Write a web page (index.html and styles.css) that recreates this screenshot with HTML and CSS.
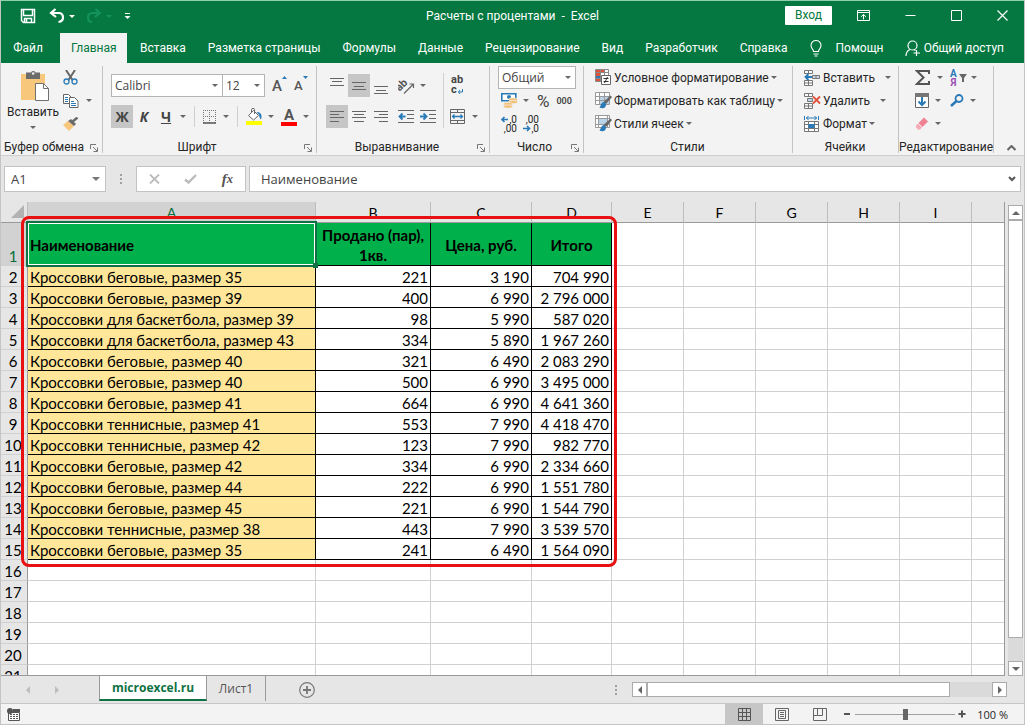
FILE: index.html
```html
<!DOCTYPE html>
<html lang="ru">
<head>
<meta charset="utf-8">
<title>Расчеты с процентами - Excel</title>
<link rel="stylesheet" href="styles.css">
</head>
<body>
<div class="window">
  <header class="titlebar">
    <div class="quick">
      <button class="ib" aria-label="Сохранить"><svg width="16" height="16" viewBox="0 0 16 16" fill="none" stroke="#fff" stroke-width="1.500"><path d="M1.500 1.500h13v13h-11l-2-2z"/><path d="M3.500 2v5.500h9V2M4.500 14v-3.500h7V14M6.500 11v3"/></svg></button>
      <button class="ib undo" aria-label="Отменить"><svg width="16" height="16" viewBox="0 0 16 16" fill="none" stroke="#fff" stroke-width="2.200"><path d="M6.500 1L2 5l5 4M2 5h7.500c3 0 4.500 2 4.500 4.500s-1.500 4-4.500 4.500"/></svg><i class="caret light"></i></button>
      <button class="ib redo" aria-label="Вернуть" disabled><svg width="16" height="16" viewBox="0 0 16 16" fill="none" stroke="#14935c" stroke-width="2"><path d="M9.500 1L14 5l-5 4M14 5H6.500C3.500 5 2 7 2 9.500S3.500 14 6 14"/></svg><i class="caret faint"></i></button>
      <button class="ib" aria-label="Настройка панели"><svg width="7" height="8" viewBox="0 0 7 8"><path d="M1 1.500h5" stroke="#fff"/><path d="M0.500 4h6L3.500 7z" fill="#fff"/></svg></button>
    </div>
    <h1 class="doc-title">Расчеты с процентами&nbsp; -&nbsp; Excel</h1>
    <div class="win-ctl">
      <button class="login">Вход</button>
      <button class="ib" aria-label="Параметры ленты"><svg width="13" height="11" viewBox="0 0 13 11" fill="none" stroke="#fff"><path d="M.5.5h12v10H.5zM.5 2.500h12M6.500 9.500V4.500M4 6.800l2.500-2.300L9 6.800"/></svg></button>
      <button class="ib" aria-label="Свернуть"><svg width="11" height="11" viewBox="0 0 11 11" stroke="#fff"><path d="M.5 5.500h10"/></svg></button>
      <button class="ib" aria-label="Развернуть"><svg width="11" height="11" viewBox="0 0 11 11" stroke="#fff" fill="none"><path d="M.5.5h10v10H.5z"/></svg></button>
      <button class="ib" aria-label="Закрыть"><svg width="11" height="11" viewBox="0 0 11 11" stroke="#fff" stroke-width="1.200"><path d="M.5.5l10 10M10.500.5l-10 10"/></svg></button>
    </div>
  </header>

  <nav class="tabs">
    <button class="tab file">Файл</button>
    <button class="tab active">Главная</button>
    <button class="tab">Вставка</button>
    <button class="tab">Разметка страницы</button>
    <button class="tab">Формулы</button>
    <button class="tab">Данные</button>
    <button class="tab">Рецензирование</button>
    <button class="tab">Вид</button>
    <button class="tab">Разработчик</button>
    <button class="tab">Справка</button>
    <button class="tab help"><svg width="12" height="17" viewBox="0 0 12 17" fill="none" stroke="#fff" stroke-width="1.100"><path d="M3.500 11.500C3.500 9 1 8.500 1 5.500a5 5 0 0 1 10 0c0 3-2.500 3.500-2.500 6zM3.500 14h5M4.500 16h3"/></svg>Помощн</button>
    <button class="tab share"><svg width="16" height="17" viewBox="0 0 16 17" fill="none" stroke="#fff" stroke-width="1.200"><circle cx="7.500" cy="5.500" r="4.500"/><path d="M1 16c0-3.500 1.500-5.500 4-6.500M9 9.500l1.500 1M11.500 10v6M8.500 13h6.500"/></svg>Общий доступ</button>
  </nav>

  <section class="ribbon">
    <div class="group g-clip">
      <div class="clip-body">
        <button class="paste"><svg width="29" height="32" viewBox="0 0 29 32"><path d="M0 4h24v26H0z" fill="#f7c77c"/><path d="M5 2.500h5a2.500 2.500 0 0 1 4.500 0H19V9H5z" fill="#6b6b6b"/><circle cx="12.200" cy="3.500" r="1.300" fill="#f3f3f3"/><path d="M14.500 13.500h8l5 5v12h-13z" fill="#fff" stroke="#707070"/><path d="M22.500 13.500v5h5" fill="none" stroke="#707070"/></svg><span>Вставить</span><i class="caret"></i></button>
        <div class="clip-side">
          <button class="ib" aria-label="Вырезать"><svg width="15" height="15" viewBox="0 0 15 15" fill="none"><path d="M3 0l6.500 10M12 0L5.500 10" stroke="#666" stroke-width="2"/><circle cx="3.500" cy="11.500" r="2.500" stroke="#2a7ab8" stroke-width="1.300"/><circle cx="11.500" cy="11.500" r="2.500" stroke="#2a7ab8" stroke-width="1.300"/></svg></button>
          <button class="ib" aria-label="Копировать"><svg width="16" height="14" viewBox="0 0 16 14" fill="#fff" stroke="#666"><path d="M.5.5h5l3 3v6h-8z"/><path d="M6.500 3.500h5l3.500 3.500v6.500H6.500z"/><path d="M2 3.500h3M2 5.500h3M2 7.500h3M8 7.500h3M8 9.500h5M8 11.500h5" stroke="#2a7ab8"/></svg><i class="caret"></i></button>
          <button class="ib" aria-label="Формат по образцу"><svg width="16" height="14" viewBox="0 0 16 14"><path d="M5 4l6 5-5 5L0 8z" fill="#f7c77c"/><path d="M5 4l3-2 5 5-2 2z" fill="#6b6b6b"/><path d="M9 5l5.500-4.500" stroke="#6b6b6b" stroke-width="2.500"/></svg></button>
        </div>
      </div>
      <div class="glabel">Буфер обмена<button class="launch" aria-label="Буфер обмена: параметры"><svg width="8" height="8" viewBox="0 0 8 8" fill="none" stroke="#777"><path d="M.5 5V.5H6M3 3l4 4M7.500 3.500v4h-4"/></svg></button></div>
    </div>

    <div class="group g-font">
      <div class="row r1">
        <label class="combo font-name"><input value="Calibri" aria-label="Шрифт"><i class="caret"></i></label><label class="combo font-size"><input value="12" aria-label="Размер шрифта"><i class="caret"></i></label>
        <button class="ib grow" aria-label="Увеличить размер"><b>A</b><svg width="5" height="3" viewBox="0 0 5 3"><path d="M0 3h5L2.500 0z" fill="#2a7ab8"/></svg></button>
        <button class="ib grow small" aria-label="Уменьшить размер"><b>A</b><svg width="5" height="3" viewBox="0 0 5 3"><path d="M0 0h5L2.500 3z" fill="#2a7ab8"/></svg></button>
      </div>
      <div class="row r2">
        <button class="tgl on letter" aria-label="Полужирный">Ж</button>
        <button class="tgl letter it" aria-label="Курсив">К</button>
        <button class="tgl letter un" aria-label="Подчеркнутый">Ч</button><i class="caret"></i>
        <i class="vsep"></i>
        <button class="ib" aria-label="Границы"><svg width="13" height="14" viewBox="0 0 13 14" fill="none" stroke="#777"><path d="M.5 0v13M12.500 0v13M6.500 0v13M0 .5h13M0 6.500h13" stroke-dasharray="1 1"/><path d="M0 13h13" stroke="#555" stroke-width="1.500"/></svg><i class="caret"></i></button>
        <i class="vsep"></i>
        <button class="ib fill" aria-label="Цвет заливки"><svg width="16" height="17" viewBox="0 0 16 17" fill="none"><path d="M7.500 2.500L2.500 7.500l5 4.500 5-4.500z" fill="#fff" stroke="#666"/><path d="M5.500 5V1.500c0-1.500 3-1.500 3 0V6" stroke="#666"/><path d="M10.500 4c4.500 0 6 3 4.500 7.500-1-1-2-2.500-1.800-4.500z" fill="#2a7ab8"/><path d="M0 13h16v4H0z" fill="#ff0"/></svg><i class="caret"></i></button>
        <button class="ib fcolor" aria-label="Цвет текста"><b>A</b><i class="caret"></i></button>
      </div>
      <div class="glabel">Шрифт<button class="launch" aria-label="Шрифт: параметры"><svg width="8" height="8" viewBox="0 0 8 8" fill="none" stroke="#777"><path d="M.5 5V.5H6M3 3l4 4M7.500 3.500v4h-4"/></svg></button></div>
    </div>

    <div class="group g-align">
      <div class="align-body">
        <div class="align-main">
          <div class="row r1">
            <button class="tgl" aria-label="По верхнему краю"><svg width="14" height="16" viewBox="0 0 14 16" stroke="#666"><path d="M0 .5h14M2 3.500h10M0 7.500h14"/></svg></button>
            <button class="tgl on" aria-label="По середине"><svg width="14" height="16" viewBox="0 0 14 16" stroke="#666"><path d="M0 4.500h14M2 8.500h10M0 11.500h14"/></svg></button>
            <button class="tgl" aria-label="По нижнему краю"><svg width="14" height="16" viewBox="0 0 14 16" stroke="#666"><path d="M0 8.500h14M2 12.500h10M0 15.500h14"/></svg></button>
            <button class="ib orient" aria-label="Ориентация"><svg width="17" height="18" viewBox="0 0 17 18"><text x="0" y="13" transform="rotate(-45 3 12)" class="orient-text">ab</text><path d="M6 16.500l9-9M11.500 7H15.500V11" stroke="#666" fill="none" stroke-width="1.200"/></svg><i class="caret"></i></button>
          </div>
          <div class="row r2">
            <button class="tgl on" aria-label="По левому краю"><svg width="14" height="12" viewBox="0 0 14 12" stroke="#666"><path d="M0 .5h14M0 3.500h9M0 6.500h14M0 10.500h9"/></svg></button>
            <button class="tgl" aria-label="По центру"><svg width="14" height="12" viewBox="0 0 14 12" stroke="#666"><path d="M0 .5h14M2 3.500h10M0 6.500h14M2 10.500h10"/></svg></button>
            <button class="tgl" aria-label="По правому краю"><svg width="14" height="12" viewBox="0 0 14 12" stroke="#666"><path d="M0 .5h14M5 3.500h9M0 6.500h14M5 10.500h9"/></svg></button>
            <button class="tgl indent" aria-label="Уменьшить отступ"><svg width="16" height="13" viewBox="0 0 16 13" fill="none" stroke="#666"><path d="M0 .5h16M9 4.500h7M9 8.500h7M0 12.500h16"/><path d="M7.500 6.500H1.500M4.500 3.500l-3 3 3 3" stroke="#2a7ab8" stroke-width="1.800"/></svg></button>
            <button class="tgl" aria-label="Увеличить отступ"><svg width="16" height="13" viewBox="0 0 16 13" fill="none" stroke="#666"><path d="M0 .5h16M9 4.500h7M9 8.500h7M0 12.500h16"/><path d="M0 6.500h6M3.500 3.500l3 3-3 3" stroke="#2a7ab8" stroke-width="1.800"/></svg></button>
          </div>
        </div>
        <div class="align-side">
          <button class="ib wrap" aria-label="Перенести текст"><b>ab</b><b>c<svg width="5" height="6" viewBox="0 0 5 6" fill="none" stroke="#2a7ab8"><path d="M4.500 0v3H.5M2 1L.5 3 2 5"/></svg></b></button>
          <button class="ib" aria-label="Объединить"><svg width="15" height="15" viewBox="0 0 15 15" fill="none" stroke="#666"><path d="M.5.5h14v14H.5zM.5 3.500h14M.5 11.500h14M7.500.5v3M7.500 11.500v3"/><path d="M2.500 7.500h10M4.500 5.500l-2 2 2 2M10.500 5.500l2 2-2 2" stroke="#2a7ab8" stroke-width="1.300"/></svg><i class="caret"></i></button>
        </div>
      </div>
      <div class="glabel offset">Выравнивание<button class="launch" aria-label="Выравнивание: параметры"><svg width="8" height="8" viewBox="0 0 8 8" fill="none" stroke="#777"><path d="M.5 5V.5H6M3 3l4 4M7.500 3.500v4h-4"/></svg></button></div>
    </div>

    <div class="group g-num">
      <label class="combo num-format"><input value="Общий" aria-label="Числовой формат"><i class="caret"></i></label>
      <div class="row r3">
        <button class="ib money" aria-label="Финансовый формат"><svg width="17" height="17" viewBox="0 0 17 17"><path d="M.8 1.800h14v7H.8z" fill="#fff" stroke="#2a7ab8" stroke-width="1.600"/><circle cx="8" cy="5" r="2" fill="#2a7ab8"/><g fill="#f3c27a" stroke="#f3f3f3" stroke-width=".6"><ellipse cx="12" cy="7.500" rx="4.500" ry="1.700"/><ellipse cx="12" cy="10" rx="4.500" ry="1.700"/><ellipse cx="7" cy="12" rx="4.500" ry="1.700"/><ellipse cx="7" cy="14.500" rx="4.500" ry="1.700"/></g></svg><i class="caret"></i></button>
        <button class="ib pct" aria-label="Процентный формат">%</button>
        <button class="ib thousands" aria-label="Формат с разделителями">000</button>
      </div>
      <div class="row r3 dec">
        <button class="ib digits" aria-label="Увеличить разрядность"><span><svg width="8" height="7" viewBox="0 0 8 7" fill="none" stroke="#2a7ab8" stroke-width="1.600"><path d="M7 3.500H1M3.500 1L1 3.500 3.500 6"/></svg>,0</span><span>,00</span></button>
        <button class="ib digits" aria-label="Уменьшить разрядность"><span>,00</span><span><svg width="8" height="7" viewBox="0 0 8 7" fill="none" stroke="#2a7ab8" stroke-width="1.600"><path d="M0 3.500h6.500M4 1l2.500 2.500L4 6"/></svg>,0</span></button>
      </div>
      <div class="glabel offset">Число<button class="launch" aria-label="Число: параметры"><svg width="8" height="8" viewBox="0 0 8 8" fill="none" stroke="#777"><path d="M.5 5V.5H6M3 3l4 4M7.500 3.500v4h-4"/></svg></button></div>
    </div>

    <div class="group g-styles">
      <button class="cmd"><svg width="17" height="17" viewBox="0 0 17 17"><path d="M.5.5h13v12H.5z" fill="#fff"/><path d="M1 1h8v3H1zM1 4h5v3H1z" fill="#e0533a"/><path d="M1 7h5v2H1z" fill="#2a7ab8"/><path d="M1 9h4v3H1z" fill="#e0533a"/><path d="M.5.5h13v12H.5zM9.500.5v6M.5 3.500h13M.5 9.500h6M5.500.5v12" fill="none" stroke="#888"/><path d="M6.500 6.500h9v9h-9z" fill="#fff" stroke="#666"/><path d="M8.500 9.500h5M8.500 12.500h5M12.500 8l-3 6" stroke="#333"/></svg>Условное форматирование<i class="caret"></i></button>
      <button class="cmd"><svg width="17" height="17" viewBox="0 0 17 17"><path d="M.5.5h14v12H.5z" fill="#fff"/><path d="M4 4h10v8H4z" fill="#b9d3e8"/><path d="M.5.5h14v12H.5zM4.500.5v12M9.500.5v12M.5 4.500h14M.5 8.500h14" fill="none" stroke="#999"/><path d="M15.500 3.500l1.500 1.500-6 7-2.500-2z" fill="#666"/><path d="M9 10c-2.500 0-3 3.500-4.500 5.500 3 1.500 7 .5 6.500-3.500z" fill="#2a7ab8"/></svg>Форматировать как таблицу<i class="caret"></i></button>
      <button class="cmd"><svg width="17" height="17" viewBox="0 0 17 17"><path d="M.5.5h14v12H.5z" fill="#fff"/><path d="M4 4h8v6H4z" fill="#b9d3e8"/><path d="M.5.5h14v12H.5zM3.500.5v12M12.500.5v12M.5 3.500h14M.5 9.500h14" fill="none" stroke="#999"/><path d="M15.500 3.500l1.500 1.500-6 7-2.500-2z" fill="#666"/><path d="M9 10c-2.500 0-3 3.500-4.500 5.500 3 1.500 7 .5 6.500-3.500z" fill="#2a7ab8"/></svg>Стили ячеек<i class="caret"></i></button>
      <div class="glabel offset">Стили</div>
    </div>

    <div class="group g-cells">
      <button class="cmd wide"><svg width="17" height="16" viewBox="0 0 17 16" fill="#fff" stroke="#777"><path d="M.5.5h8v3h-8zM4.500.5v3M.5 10.500h8v5h-8zM4.500 10.500v5M.5 13h8"/><path d="M8.500 5.500h7v3h-7zM12 5.500v3" fill="#c9d7e6"/><path d="M8 7H1.500M4.500 4l-3 3 3 3" fill="none" stroke="#2a7ab8" stroke-width="1.800"/></svg>Вставить<i class="caret"></i></button>
      <button class="cmd wide"><svg width="17" height="16" viewBox="0 0 17 16" fill="#fff" stroke="#777"><path d="M.5.5h8v3h-8zM4.500.5v3M.5 10.500h8v5h-8zM4.500 10.500v5M.5 13h8"/><path d="M3.500 5.500h5v3h-5z" fill="#b9d3e8"/><path d="M9 3.500l7 7M16 3.500l-7 7" stroke="#e0533a" stroke-width="1.800"/></svg>Удалить<i class="caret"></i></button>
      <button class="cmd"><svg width="17" height="16" viewBox="0 0 17 16" fill="#fff" stroke="#777"><path d="M.5 5.500h14v10H.5zM4.500 5.500v10M.5 8.500h14M.5 12.500h14M10.500 5.500v10"/><path d="M4.500 8h6v4h-6z" fill="#2a7ab8" stroke="none"/><path d="M.5 0v4M14.500 0v4M2 2h11M4.500 0L2.500 2l2 2M10.500 0l2 2-2 2" fill="none" stroke="#2a7ab8"/></svg>Формат<i class="caret"></i></button>
      <div class="glabel offset">Ячейки</div>
    </div>

    <div class="group g-edit">
      <div class="edit-grid">
        <button class="ib" aria-label="Автосумма"><svg width="16" height="15" viewBox="0 0 16 15" fill="none" stroke="#555" stroke-width="2"><path d="M14 4V1H2l6.500 6.500L2 14h12v-3"/></svg><i class="caret"></i></button>
        <button class="ib sort" aria-label="Сортировка и фильтр"><span><b>А</b><b class="ya">Я</b></span><svg width="8" height="8" viewBox="0 0 8 8"><path d="M0 0h8L5 4v4H3V4z" fill="#666"/></svg><i class="caret"></i></button>
        <button class="ib" aria-label="Заполнить"><svg width="14" height="15" viewBox="0 0 14 15"><path d="M.5.5h13v14H.5z" fill="#fff" stroke="#666"/><path d="M0 0h14v4H0z" fill="#777"/><path d="M7 4v8M3.500 8.500L7 12l3.500-3.500" stroke="#2a7ab8" stroke-width="2" fill="none"/></svg><i class="caret"></i></button>
        <button class="ib" aria-label="Найти и выделить"><svg width="14" height="13" viewBox="0 0 14 13" fill="none" stroke="#2a7ab8"><circle cx="9" cy="4.500" r="3.500" stroke-width="1.800"/><path d="M6.500 7L1 12" stroke-width="2.500"/></svg><i class="caret"></i></button>
        <button class="ib" aria-label="Очистить"><svg width="14" height="13" viewBox="0 0 14 13"><path d="M9 .5l4 4L7.500 10 3.500 6z" fill="#f08294"/><path d="M3 6.500l4 4-2 2H3L1 10.500v-2z" fill="#f7aab6"/></svg><i class="caret"></i></button>
      </div>
      <div class="glabel">Редактирование</div>
    </div>
    <button class="ib collapse" aria-label="Свернуть ленту"><svg width="9" height="6" viewBox="0 0 9 6" fill="none" stroke="#666" stroke-width="2"><path d="M.5 5l4-4 4 4"/></svg></button>
  </section>

  <section class="formula-bar">
    <label class="name-box"><input value="A1" aria-label="Имя"><i class="caret big"></i></label>
    <i class="dots"></i>
    <div class="fx-box">
      <button class="ib" aria-label="Отмена"><svg width="11" height="10" viewBox="0 0 11 10" stroke="#bbb" stroke-width="1.800"><path d="M1 .5l9 9M10 .5l-9 9"/></svg></button>
      <button class="ib" aria-label="Ввод"><svg width="13" height="10" viewBox="0 0 13 10" fill="none" stroke="#bbb" stroke-width="2.400"><path d="M1 5.500L4.500 8.500 12 1"/></svg></button>
      <button class="ib fx" aria-label="Вставить функцию">f<small>x</small></button>
    </div>
    <label class="formula"><input value="Наименование" aria-label="Строка формул"><svg width="8" height="6" viewBox="0 0 8 6" fill="none" stroke="#555" stroke-width="2"><path d="M1 1l3 3 3-3"/></svg></label>
  </section>

  <main class="work">
    <div class="sheet">
      <table>
        <colgroup><col class="c0"><col class="ca"><col class="cb"><col class="cc"><col class="cd"><col class="ce"><col class="ce"><col class="ce"><col class="ce"><col class="ce"><col></colgroup>
        <thead><tr><th class="corner"><svg width="13" height="13" viewBox="0 0 13 13"><path d="M13 0v13H0z" fill="#b2b2b2"/></svg></th><th class="sel">A</th><th>B</th><th>C</th><th>D</th><th>E</th><th>F</th><th>G</th><th>H</th><th>I</th><th></th></tr></thead>
        <tbody>
        <tr class="head"><th class="sel">1</th><td class="picked">Наименование</td><td>Продано (пар), 1кв.</td><td>Цена, руб.</td><td>Итого</td><td><td><td><td><td><td></tr>
        <tr class="rec"><th>2</th><td>Кроссовки беговые, размер 35<td>221<td>3 190<td>704 990<td><td><td><td><td><td></tr>
        <tr class="rec"><th>3</th><td>Кроссовки беговые, размер 39<td>400<td>6 990<td>2 796 000<td><td><td><td><td><td></tr>
        <tr class="rec"><th>4</th><td>Кроссовки для баскетбола, размер 39<td>98<td>5 990<td>587 020<td><td><td><td><td><td></tr>
        <tr class="rec"><th>5</th><td>Кроссовки для баскетбола, размер 43<td>334<td>5 890<td>1 967 260<td><td><td><td><td><td></tr>
        <tr class="rec"><th>6</th><td>Кроссовки беговые, размер 40<td>321<td>6 490<td>2 083 290<td><td><td><td><td><td></tr>
        <tr class="rec"><th>7</th><td>Кроссовки беговые, размер 40<td>500<td>6 990<td>3 495 000<td><td><td><td><td><td></tr>
        <tr class="rec"><th>8</th><td>Кроссовки беговые, размер 41<td>664<td>6 990<td>4 641 360<td><td><td><td><td><td></tr>
        <tr class="rec"><th>9</th><td>Кроссовки теннисные, размер 41<td>553<td>7 990<td>4 418 470<td><td><td><td><td><td></tr>
        <tr class="rec"><th>10</th><td>Кроссовки теннисные, размер 42<td>123<td>7 990<td>982 770<td><td><td><td><td><td></tr>
        <tr class="rec"><th>11</th><td>Кроссовки беговые, размер 42<td>334<td>6 990<td>2 334 660<td><td><td><td><td><td></tr>
        <tr class="rec"><th>12</th><td>Кроссовки беговые, размер 44<td>222<td>6 990<td>1 551 780<td><td><td><td><td><td></tr>
        <tr class="rec"><th>13</th><td>Кроссовки беговые, размер 45<td>221<td>6 990<td>1 544 790<td><td><td><td><td><td></tr>
        <tr class="rec"><th>14</th><td>Кроссовки теннисные, размер 38<td>443<td>7 990<td>3 539 570<td><td><td><td><td><td></tr>
        <tr class="rec"><th>15</th><td>Кроссовки беговые, размер 35<td>241<td>6 490<td>1 564 090<td><td><td><td><td><td></tr>
        <tr><th>16</th><td><td><td><td><td><td><td><td><td><td></tr>
        <tr><th>17</th><td><td><td><td><td><td><td><td><td><td></tr>
        <tr><th>18</th><td><td><td><td><td><td><td><td><td><td></tr>
        <tr><th>19</th><td><td><td><td><td><td><td><td><td><td></tr>
        <tr><th>20</th><td><td><td><td><td><td><td><td><td><td></tr>
        <tr><th>21</th><td><td><td><td><td><td><td><td><td><td></tr>
        </tbody>
      </table>
      <div class="callout"></div>
    </div>
    <div class="vscroll">
      <button class="sb" aria-label="Вверх"><i class="tri up"></i></button>
      <div class="vthumb"></div>
      <button class="sb" aria-label="Вниз"><i class="tri down"></i></button>
    </div>
  </main>

  <footer class="sheet-bar">
    <div class="nav-arrows"><i class="tri left pale"></i><i class="tri right pale"></i></div>
    <button class="sheet-tab current">microexcel.ru</button>
    <button class="sheet-tab">Лист1</button>
    <button class="ib add" aria-label="Новый лист"><svg width="16" height="16" viewBox="0 0 16 16" fill="none" stroke="#777"><circle cx="8" cy="8" r="7.300" stroke-width="1.200"/><path d="M8 4v8M4 8h8" stroke-width="1.800"/></svg></button>
    <i class="dots"></i>
    <div class="hscroll">
      <button class="sb" aria-label="Влево"><i class="tri left"></i></button>
      <div class="hthumb"></div>
      <button class="sb" aria-label="Вправо"><i class="tri right"></i></button>
    </div>
  </footer>

  <footer class="status">
    <button class="ib macro" aria-label="Запись макроса"><svg width="13" height="13" viewBox="0 0 13 13"><path d="M1.500 4.500h11v8h-11z" fill="#fff" stroke="#555"/><path d="M6 1h7v3H6z" fill="#555"/><circle cx="3" cy="3" r="3" fill="#555"/><path d="M3 6.500h8M3 8.500h8M3 10.500h8" stroke="#555" stroke-dasharray="2 1"/></svg></button>
    <button class="view on" aria-label="Обычный"><svg width="13" height="13" viewBox="0 0 13 13" fill="none" stroke="#555"><path d="M.5.5h12v12H.5zM4.500.5v12M8.500.5v12M.5 4.500h12M.5 8.500h12"/></svg></button>
    <button class="view" aria-label="Разметка страницы"><svg width="14" height="13" viewBox="0 0 14 13" fill="none" stroke="#666"><path d="M.5.5h13v12H.5zM3.500 2.500h7v8h-7zM5 4.500h4M5 6.500h4M5 8.500h4"/></svg></button>
    <button class="view" aria-label="Страничный"><svg width="14" height="13" viewBox="0 0 14 13" fill="none" stroke="#666"><path d="M.5.5h13v12H.5zM4.500.5v7h5v-7M.5 7.500h4"/></svg></button>
    <button class="ib" aria-label="Уменьшить"><svg width="8" height="8" viewBox="0 0 8 8" stroke="#555" stroke-width="2"><path d="M1 4h6"/></svg></button>
    <input class="zoom" type="range" min="0" max="100" value="50" aria-label="Масштаб">
    <button class="ib" aria-label="Увеличить"><svg width="8" height="8" viewBox="0 0 8 8" stroke="#555" stroke-width="2"><path d="M.5 4h7M4 .5v7"/></svg></button>
    <span class="pctval">100 %</span>
  </footer>
</div>
</body>
</html>
```
FILE: styles.css
```css
* { box-sizing: border-box; }
body { margin: 0; font-family: Roboto, "Open Sans", sans-serif; font-size: 12px; color: #262626; }
button, input { font: inherit; color: inherit; border: 0; background: none; padding: 0; margin: 0; border-radius: 0; }
button { white-space: nowrap; }
svg { display: block; flex: none; }
input { min-width: 0; outline: 0; }

.window { height: 100vh; display: flex; flex-direction: column; overflow: hidden; background: #e6e6e6; border: 1px solid #c4c4c4; border-top-color: #8fcfae; }
.ib { display: inline-flex; align-items: center; justify-content: center; gap: 7px; }
.caret { flex: none; width: 0; height: 0; border: 3px solid transparent; border-top-color: #666; border-bottom-width: 0; }
.caret.light { border-top-color: #fff; }
.caret.faint { border-top-color: #14935c; }
.caret.big { border-width: 4px 4px 0; border-top-color: #777; }

/* Title bar and ribbon tabs */
.titlebar { display: grid; grid-template-columns: 1fr auto 1fr; align-items: center; height: 32px; flex: none; background: #047840; color: #fff; padding-bottom: 2px; }
.quick { display: flex; align-items: center; padding-left: 19px; }
.undo { margin-left: 13px; gap: 4px; }
.redo { margin-left: 11px; gap: 4px; }
.quick .redo + .ib { margin-left: 12px; }
.doc-title { margin: 0; font-size: 12px; font-weight: 400; }
.win-ctl { display: flex; align-items: center; justify-content: flex-end; gap: 35px; padding: 0 16px 2px 0; }
.login { width: 47px; height: 19px; background: #fff; color: #047840; border-radius: 1px; }
.login + .ib { margin-left: -10px; }
.tabs { display: flex; height: 30px; flex: none; background: #047840; color: #fff; }
.tab { padding: 0 11px; height: 30px; }
.tab.file { width: 59px; padding-right: 16px; }
.tab.active { width: 67px; background: #f3f3f3; color: #047840; margin-right: 2px; }
.help, .share { display: flex; align-items: center; gap: 14px; }
.share { margin-left: auto; gap: 3px; padding: 0 20px 0 0; }

/* Ribbon */
.ribbon { display: flex; height: 93px; flex: none; background: #f3f3f3; border-bottom: 1px solid #cfcfcf; padding-top: 3px; }
.group { display: flex; flex-direction: column; flex: none; border-right: 1px solid #c3c3c3; margin-bottom: 2px; }
.glabel { display: flex; align-items: center; justify-content: center; margin-top: auto; height: 12px; position: relative; white-space: nowrap; }
.glabel.offset { padding-right: 12px; }
.launch { position: absolute; right: 4px; bottom: 1px; }
.row { display: flex; align-items: center; height: 23px; }
.r1 { margin-top: 8px; }
.r2 { margin-top: 8px; }
.tgl { display: flex; align-items: center; justify-content: center; width: 22px; height: 23px; }
.tgl.on { background: #c6c6c6; }
.letter { font-family: "Open Sans", sans-serif; font-weight: 700; font-size: 14px; color: #444; }
.it { font-style: italic; }
.un { text-decoration: underline; }
.vsep { width: 1px; height: 21px; background: #d0d0d0; margin: 0 8px; }
.combo { display: flex; align-items: center; height: 23px; background: #fff; border: 1px solid #b4b4b4; padding: 0 4px 0 3px; }
.combo input { flex: 1; width: 10px; color: #444; font-family: "Open Sans", sans-serif; }

.g-clip { width: 102px; }
.clip-body { display: flex; padding-left: 7px; }
.paste { display: flex; flex-direction: column; align-items: center; gap: 1px; width: 50px; padding-top: 4px; }
.paste svg { margin-left: 5px; }
.paste span { line-height: 18px; }
.paste .caret { margin-top: 4px; }
.clip-side { display: flex; flex-direction: column; align-items: flex-start; padding-left: 5px; }
.clip-side .ib { height: 23px; }
.g-clip .glabel { justify-content: flex-start; padding-left: 3px; }

.g-font { width: 214px; padding-left: 8px; }
.g-font .glabel { padding-right: 33px; }
.font-name { width: 112px; }
.font-size { width: 43px; margin-left: -1px; }
.grow { align-items: flex-start; gap: 0; margin-left: 7px; color: #555; font-size: 15px; line-height: 20px; }
.grow b { font-weight: 500; }
.grow.small { font-size: 13px; margin-left: 7px; }
.g-font .r2 .tgl + .caret { margin-left: 3px; }
.fill { gap: 6px; }
.fcolor { margin-left: 7px; gap: 6px; color: #555; font-size: 15px; }
.fcolor b { width: 16px; line-height: 14px; border-bottom: 4px solid #f00; }

.g-align { width: 173px; }
.align-body { display: flex; padding-left: 9px; }
.align-main { width: 117px; }
.indent { margin-left: 3px; }
.orient { margin-left: 6px; gap: 5px; }
.orient-text { font-size: 11px; font-weight: 700; fill: #555; }
.align-side { display: flex; flex-direction: column; align-items: flex-start; gap: 9px; margin-top: 7px; padding-left: 6px; border-left: 1px solid #d0d0d0; height: 55px; }
.wrap { flex-direction: column; gap: 0; align-items: flex-start; color: #444; font-size: 11px; line-height: 10px; height: 23px; padding-left: 1px; }
.wrap b { display: flex; align-items: flex-end; gap: 1px; }
.align-side .ib + .ib { height: 23px; }

.g-num { width: 94px; padding-left: 8px; }
.num-format { width: 78px; }
.r3 { height: 23px; padding-left: 3px; }
.money { gap: 5px; }
.pct { margin-left: 8px; font-size: 17px; color: #444; }
.thousands { margin-left: 7px; font-size: 9px; font-weight: 600; color: #444; }
.digits { flex-direction: column; align-items: flex-end; gap: 0; font-size: 10px; line-height: 9px; width: 16px; }
.digits + .digits { margin-left: 6px; }
.digits span { display: flex; align-items: center; }

.g-styles { width: 209px; padding-left: 11px; }
.g-cells { width: 106px; padding-left: 11px; }
.cmd { display: flex; align-items: center; gap: 2px; height: 23px; }
.cmd.wide .caret { margin-left: 8px; }

.g-edit { width: 95px; }
.edit-grid { display: grid; grid-template-columns: 35px 1fr; grid-auto-rows: 23px; padding-left: 16px; justify-items: start; }
.edit-grid .ib { gap: 6px; }
.sort { line-height: 9px; font-size: 10px; color: #2a7ab8; }
.edit-grid .sort { gap: 2px; }
.edit-grid .sort .caret { margin-left: 2px; }
.sort span { display: flex; flex-direction: column; }
.ya { color: #9b4fb5; }
.collapse { margin: auto 8px 4px auto; }

/* Formula bar */
.formula-bar { display: flex; height: 46px; flex: none; padding: 10px 3px 10px 3px; color: #444; font-family: "Open Sans", sans-serif; font-size: 13px; }
.name-box, .fx-box, .formula { display: flex; align-items: center; background: #fff; border: 1px solid #c3c3c3; }
.name-box { width: 102px; padding: 0 5px 0 6px; }
.name-box input { flex: 1; }
.dots { width: 2px; height: 10px; background: repeating-linear-gradient(#a0a0a0 0 2px, transparent 2px 4px); align-self: center; margin: 0 14px; }
.fx-box { width: 110px; justify-content: space-between; padding: 0 12px; }
.fx { font-family: "Liberation Serif", serif; font-style: italic; font-weight: 700; font-size: 15px; gap: 0; color: #555; }
.formula { flex: 1; margin-left: 3px; padding: 0 4px 0 11px; }
.formula input { flex: 1; }

/* Grid */
.work { flex: 1; display: flex; min-height: 0; }
.sheet { flex: 1; min-width: 0; position: relative; overflow: hidden; border-right: 1px solid #9a9a9a; border-bottom: 1px solid #9a9a9a; }
table { width: 100%; table-layout: fixed; border-collapse: separate; border-spacing: 0; font-family: Lato, "Noto Sans", sans-serif; font-size: 15px; color: #000; }
.c0 { width: 27px; }
.ca { width: 288px; }
.cb { width: 115px; }
.cc { width: 101px; }
.cd { width: 80px; }
.ce { width: 72px; }
th, td { height: 21px; padding: 2px 2px 0; line-height: 18px; border-right: 1px solid #d0d0d0; border-bottom: 1px solid #d0d0d0; white-space: nowrap; overflow: hidden; }
td { background: #fff; }
td:last-child, thead th:last-child { border-right: 0; }
th { font-weight: 400; background: #e6e6e6; border-right-color: #9a9a9a; vertical-align: bottom; }
tbody th { padding: 2px 2px 0 0; }
thead th { border-right-color: #bdbdbd; border-bottom-color: #9a9a9a; font-size: 14px; }
thead .corner { padding: 0 2px 4px 10px; }
th.sel { background: #d2d2d2; color: #0a6b3d; }
.head td, .head th { height: 43px; }
.head td:nth-child(-n+5) { background: #00b04a; font-weight: 700; text-align: center; white-space: normal; border-color: #000; line-height: 20px; }
.head td.picked { text-align: left; }
.rec td:nth-child(-n+5) { border-color: #000; text-align: right; }
.rec td:nth-child(2) { background: #ffe699; text-align: left; }
.head td.picked { position: relative; overflow: visible; }
.picked::before { content: ""; position: absolute; inset: -2px; border: 2px solid #107244; box-shadow: inset 0 0 0 1px #fff; }
.picked::after { content: ""; position: absolute; right: -3px; bottom: -3px; width: 5px; height: 5px; background: #107244; }
.callout { position: absolute; left: 20px; top: 14px; width: 596px; height: 351px; border: 3px solid #e81010; border-radius: 8px; }
.vscroll { display: flex; flex-direction: column; width: 19px; padding: 3px 1px 0 3px; background: linear-gradient(#dadada, #dadada) 3px 3px / 15px 100% no-repeat; }
.sb { display: flex; align-items: center; justify-content: center; flex: none; width: 15px; height: 15px; background: #fff; border: 1px solid #ababab; }
.vthumb { flex: 1; background: #fff; border: 1px solid #ababab; margin-bottom: 23px; }
.tri { width: 0; height: 0; border: 4px solid transparent; }
.up { border-bottom-color: #666; border-top: 0; }
.down { border-top-color: #666; border-bottom: 0; }
.left { border-right-color: #666; border-left: 0; }
.right { border-left-color: #666; border-right: 0; }
.left.pale { border-right-color: #bdbdbd; }
.right.pale { border-left-color: #bdbdbd; }

/* Sheet tabs */
.sheet-bar { display: flex; align-items: center; height: 28px; flex: none; border-bottom: 1px solid #c6c6c6; font-family: "Open Sans", sans-serif; }
.nav-arrows { display: flex; gap: 25px; width: 98px; padding-left: 25px; flex: none; }
.sheet-tab { align-self: flex-start; height: 25px; width: 59px; color: #555; border-right: 1px solid #9a9a9a; }
.sheet-tab.current { width: 108px; background: #fff; color: #107244; font-weight: 700; border: 1px solid #9a9a9a; border-top: 0; border-bottom: 2px solid #107244; }
.add { margin-left: 33px; }
.sheet-bar .dots { margin-left: auto; margin-right: 15px; }
.hscroll { display: flex; width: 375px; margin-right: 17px; background: #dadada; }
.hthumb { flex: 1; background: #fff; border: 1px solid #ababab; margin-right: 42px; }

/* Status bar */
.status { display: flex; align-items: center; height: 20px; flex: none; background: #f3f3f3; padding: 0 16px 0 6px; font-family: "Open Sans", sans-serif; }
.macro { margin-right: auto; }
.view { display: flex; align-items: center; justify-content: center; width: 38px; height: 20px; }
.view.on { background: #c6c6c6; }
.view + .ib { margin-left: 4px; }
.zoom { appearance: none; width: 100px; height: 12px; margin: 0 3px 0 4px; background: linear-gradient(#a0a0a0, #a0a0a0) center / 100% 1px no-repeat; }
.zoom::-webkit-slider-thumb { appearance: none; width: 5px; height: 11px; background: #666; }
.pctval { margin-left: 11px; white-space: nowrap; font-size: 11px; }
```
